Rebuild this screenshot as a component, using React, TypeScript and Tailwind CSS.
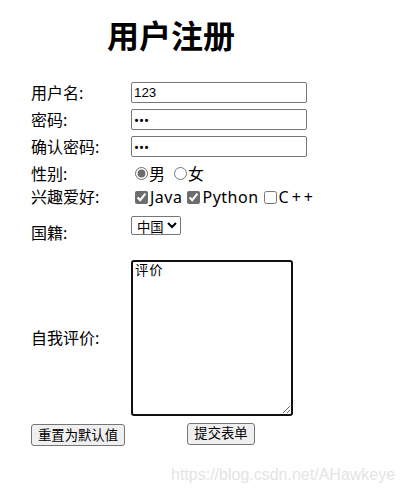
import React, { useState } from "react";

// Registration form, laid out like a plain two-column HTML table
const labelCls = "w-[102px] pl-[2px] text-[16px] text-black";

export default function App() {
  const [name, setName] = useState("123");
  const [pwd, setPwd] = useState("123");
  const [pwd2, setPwd2] = useState("123");
  const [gender, setGender] = useState("male");
  const [hobbies, setHobbies] = useState<string[]>(["java", "python"]);
  const [country, setCountry] = useState("cn");
  const [review, setReview] = useState("评价");

  const toggle = (h: string) =>
    setHobbies(prev => (prev.includes(h) ? prev.filter(x => x !== h) : [...prev, h]));

  const inputCls =
    "w-[176px] h-[21px] border border-[#767676] rounded-[2px] px-[2px] text-[13.33px] bg-white outline-none";

  return (
    <div
      className="relative w-[403px] h-[492px] bg-white overflow-hidden"
      style={{ fontFamily: '"Noto Sans", "Noto Sans CJK SC", sans-serif' }}
    >
      <form className="flex flex-col pt-[14px] pl-[29px]" onSubmit={e => e.preventDefault()}>
        <h1 className="w-[284px] h-[40px] leading-[40px] text-[32px] font-bold text-center" style={{ fontFamily: '"Noto Sans CJK SC", sans-serif' }}>
          用户注册
        </h1>

        <div className="mt-[25px] flex flex-col">
          {/* text inputs */}
          <div className="flex items-center h-[27px]">
            <div className={labelCls}>用户名:</div>
            <input className={inputCls} style={{ fontFamily: '"Liberation Sans", sans-serif' }} value={name} onChange={e => setName(e.target.value)} />
          </div>
          <div className="flex items-center h-[27px]">
            <div className={labelCls}>密码:</div>
            <input type="password" className={inputCls} value={pwd} onChange={e => setPwd(e.target.value)} />
          </div>
          <div className="flex items-center h-[27px]">
            <div className={labelCls}>确认密码:</div>
            <input type="password" className={inputCls} value={pwd2} onChange={e => setPwd2(e.target.value)} />
          </div>

          {/* gender */}
          <div className="flex items-center h-[27px]">
            <div className={labelCls}>性别:</div>
            <label className="flex items-center text-[16px] ml-[4px]">
              <input type="radio" name="gender" className="w-[13px] h-[13px] m-0 accent-[#6d6d6d]" checked={gender === "male"} onChange={() => setGender("male")} />
              <span className="ml-[1px]">男</span>
            </label>
            <label className="flex items-center text-[16px] ml-[9px]">
              <input type="radio" name="gender" className="w-[13px] h-[13px] m-0 accent-[#6d6d6d]" checked={gender === "female"} onChange={() => setGender("female")} />
              <span className="ml-[1px]">女</span>
            </label>
          </div>

          {/* hobbies */}
          <div className="flex items-center h-[20px]">
            <div className={labelCls}>兴趣爱好:</div>
            <label className="flex items-center text-[16px] ml-[4px]">
              <input type="checkbox" className="w-[13px] h-[13px] m-0 accent-[#6d6d6d]" checked={hobbies.includes("java")} onChange={() => toggle("java")} />
              <span className="ml-[2px] tracking-[0.5px]">Java</span>
            </label>
            <label className="flex items-center text-[16px] ml-[5px]">
              <input type="checkbox" className="w-[13px] h-[13px] m-0 accent-[#6d6d6d]" checked={hobbies.includes("python")} onChange={() => toggle("python")} />
              <span className="ml-[2px] tracking-[0.5px]">Python</span>
            </label>
            <label className="flex items-center text-[16px] ml-[5px]">
              <input type="checkbox" className="w-[13px] h-[13px] m-0 accent-[#6d6d6d]" checked={hobbies.includes("cpp")} onChange={() => toggle("cpp")} />
              <span className="ml-[2px] tracking-[3px]">C++</span>
            </label>
          </div>

          {/* country */}
          <div className="flex items-center h-[51px]">
            <div className={labelCls}>国籍:</div>
            <div className="self-start pt-[7px]">
              <select
                className="w-[50px] h-[19px] border border-[#767676] rounded-[2px] text-[13.33px] bg-white pl-[1px]"
                value={country}
                onChange={e => setCountry(e.target.value)}
              >
                <option value="cn">中国</option>
                <option value="us">美国</option>
                <option value="jp">日本</option>
              </select>
            </div>
          </div>

          {/* self review */}
          <div className="flex items-center h-[160px]">
            <div className={labelCls}>自我评价:</div>
            <textarea
              className="w-[162px] h-[156px] border-2 border-[#101010] rounded-[3px] px-[2px] text-[13.33px] leading-[16px] tracking-[1px] resize outline-none"
              style={{ fontFamily: '"Noto Sans CJK SC", monospace' }}
              value={review}
              onChange={e => setReview(e.target.value)}
            />
          </div>

          {/* buttons */}
          <div className="flex items-center h-[22px] mt-[5px]">
            <div className="w-[102px] pl-[2px]">
              <button type="reset" className="h-[22px] px-[6px] border border-[#767676] rounded-[3px] bg-[#efefef] text-[13.33px] leading-none">
                重置为默认值
              </button>
            </div>
            <div className="w-[180px] flex justify-center">
              <button type="submit" className="h-[22px] px-[6px] border border-[#767676] rounded-[3px] bg-[#efefef] text-[13.33px] leading-none">
                提交表单
              </button>
            </div>
          </div>
        </div>
      </form>

      <div
        className="absolute left-[171px] top-[463px] text-[16px] text-[#e4e4e4] whitespace-nowrap"
        style={{ fontFamily: '"Liberation Sans", Arial, sans-serif' }}
      >
        https://blog.csdn.net/AHawkeye
      </div>
    </div>
  );
}
